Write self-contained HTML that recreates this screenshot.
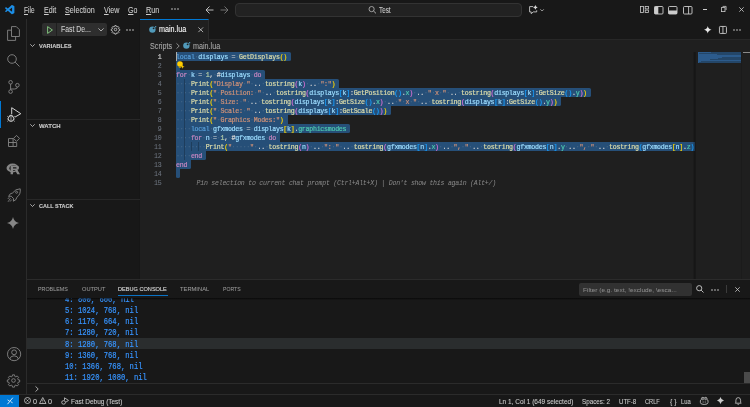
<!DOCTYPE html>
<html><head><meta charset="utf-8">
<style>
*{box-sizing:border-box;margin:0;padding:0}
html,body{width:750px;height:407px;overflow:hidden;background:#181818;font-family:"Liberation Sans",sans-serif;color:#cccccc}
.a{position:absolute}
svg{position:absolute;overflow:visible}
/* title bar */
#title{left:0;top:0;width:750px;height:19.8px;background:#181818;border-bottom:0.8px solid #262626}
.menu{position:absolute;top:5px;font-size:8.2px;line-height:10px;color:#cccccc;white-space:pre;-webkit-text-stroke:0.08px currentColor}
.menu u{text-decoration-thickness:0.6px;text-underline-offset:0.8px}
#cc{left:235px;top:2.8px;width:287px;height:13.9px;background:#222222;border:0.8px solid #333333;border-radius:4px}
/* activity */
#act{left:0;top:19px;width:27px;height:375px;background:#181818;border-right:1px solid #2b2b2b}
/* sidebar */
#side{left:27px;top:19px;width:113px;height:261px;background:#181818;border-right:0.8px solid #161616}
.sh{position:absolute;left:11.5px;font-size:6.2px;font-weight:bold;color:#cccccc;line-height:8px;white-space:pre;-webkit-text-stroke:0.1px currentColor}
.sep{position:absolute;left:0;width:112.5px;height:0.9px;background:#282828}
/* editor */
#ed{left:140px;top:19px;width:610px;height:261px;background:#1f1f1f}
#tabs{left:140px;top:19px;width:610px;height:20.8px;background:#181818;border-bottom:0.9px solid #272727}
#tab{left:140px;top:19px;width:69px;height:21.5px;background:#1f1f1f;border-top:1.5px solid #0078d4;border-right:0.9px solid #2b2b2b}
.sel{position:absolute;left:176.3px;height:9px;background:#264f78}
.ln{position:absolute;left:176.1px;height:9px;font-family:"Liberation Mono",monospace;font-size:6.6px;letter-spacing:-0.26px;line-height:9px;white-space:pre;padding-top:1.4px;-webkit-text-stroke:0.2px currentColor}
.ln b{font-weight:normal}
.ln i{font-style:normal;color:rgba(227,228,226,0.17);-webkit-text-stroke:0}
.num{position:absolute;left:140px;width:21.5px;text-align:right;font-family:"Liberation Mono",monospace;font-size:6.6px;letter-spacing:-0.26px;line-height:9px;color:#6e7681;padding-top:1.1px;-webkit-text-stroke:0.05px currentColor}
.num.act{-webkit-text-stroke:0.2px currentColor}
.num.act{color:#cccccc}
/* panel */
#panel{left:27px;top:279px;width:723px;height:115px;background:#181818;border-top:1px solid #2b2b2b}
.pt{position:absolute;top:285.1px;font-size:6.2px;line-height:8px;color:#9d9d9d;white-space:pre;-webkit-text-stroke:0.05px currentColor}
.con{position:absolute;left:65.2px;font-family:"Liberation Mono",monospace;font-size:8.6px;line-height:11.2px;color:#3794ff;white-space:pre;padding-top:1.8px;transform:scaleX(0.835);transform-origin:0 0;-webkit-text-stroke:0.2px currentColor}
/* status */
#status{left:0;top:394px;width:750px;height:13px;background:#181818;border-top:1px solid #2b2b2b}
.st{position:absolute;top:396.5px;font-size:7.2px;line-height:10px;color:#cccccc;white-space:pre;-webkit-text-stroke:0.08px currentColor}
</style></head><body><div id="wrap" style="position:absolute;left:0;top:0;width:750px;height:407px;will-change:transform">
<!-- TITLE BAR -->
<div id="title" class="a"></div>
<svg style="left:5.3px;top:4.8px" width="9.5" height="9.3" viewBox="0 0 100 100"><path fill="#1c8ee6" d="M96.46 10.8L75.86.87C73.48-.28 70.62.2 68.74 2.08L29.3 38.06 12.12 25.02c-1.6-1.22-3.84-1.12-5.33.24L1.28 30.27c-1.82 1.65-1.82 4.52 0 6.17L16.18 50 1.28 63.56c-1.82 1.65-1.82 4.52 0 6.17l5.51 5.01c1.49 1.36 3.73 1.46 5.33.24l17.18-13.04 39.45 35.98c1.88 1.88 4.74 2.36 7.120 1.21l20.6-9.92C98.6 88.4 100 86.2 100 83.8V16.2c0-2.4-1.4-4.6-3.540-5.4zM75.02 72.7L45.11 50 75.02 27.3v45.4z"/></svg>
<div class="menu" style="left:24.3px;top:5.6px;transform:scaleX(0.8019);transform-origin:0 0"><u>F</u>ile</div>
<div class="menu" style="left:44.2px;top:5.6px;transform:scaleX(0.8637);transform-origin:0 0"><u>E</u>dit</div>
<div class="menu" style="left:65.3px;top:5.6px;transform:scaleX(0.8812);transform-origin:0 0"><u>S</u>election</div>
<div class="menu" style="left:103.9px;top:5.6px;transform:scaleX(0.8681);transform-origin:0 0"><u>V</u>iew</div>
<div class="menu" style="left:128px;top:5.6px;transform:scaleX(0.8503);transform-origin:0 0"><u>G</u>o</div>
<div class="menu" style="left:146px;top:5.6px;transform:scaleX(0.8848);transform-origin:0 0"><u>R</u>un</div>
<svg style="left:170.8px;top:8.3px" width="8" height="2" viewBox="0 0 8 2"><circle cx="1" cy="1" r="0.75" fill="#dddddd"/><circle cx="4" cy="1" r="0.75" fill="#dddddd"/><circle cx="7" cy="1" r="0.75" fill="#dddddd"/></svg>
<svg style="left:205px;top:6px" width="9" height="8" viewBox="0 0 9 8"><path d="M8.5 4H1M4.5 0.5L1 4L4.5 7.5" stroke="#cccccc" stroke-width="0.9" fill="none"/></svg>
<svg style="left:219.5px;top:6px" width="9" height="8" viewBox="0 0 9 8"><path d="M0.5 4H8M4.5 0.5L8 4L4.5 7.5" stroke="#7a7a7a" stroke-width="0.9" fill="none"/></svg>
<div id="cc" class="a"></div>
<svg style="left:367.6px;top:6px" width="9" height="8" viewBox="0 0 9 8"><circle cx="3.6" cy="3.1" r="2.6" stroke="#bbbbbb" stroke-width="0.8" fill="none"/><path d="M5.5 5L8 7.4" stroke="#bbbbbb" stroke-width="0.9"/></svg>
<div class="menu" style="left:379.2px;top:6px;transform:scaleX(0.7725);transform-origin:0 0">Test</div>
<svg style="left:528.8px;top:4.6px" width="16" height="10" viewBox="0 0 16 10"><path d="M4.2 1.6H0.6V6.9H2.2V8.7L4.3 6.9H7.7V5.3" stroke="#cccccc" stroke-width="0.9" fill="none"/><path d="M6.4 0Q6.7 2 8.7 2.4Q6.7 2.8 6.4 4.8Q6.1 2.8 4.1 2.4Q6.1 2 6.4 0Z" fill="#d8d8d8"/><path d="M11.4 4.3L13.1 6L14.8 4.3" stroke="#bbbbbb" stroke-width="0.8" fill="none"/></svg>
<!-- layout icons -->
<svg style="left:640px;top:6px" width="9" height="7" viewBox="0 0 9 7"><rect x="0.5" y="0.5" width="3" height="6" stroke="#cccccc" stroke-width="0.8" fill="none"/><rect x="5.2" y="0.5" width="3.2" height="2.4" stroke="#cccccc" stroke-width="0.8" fill="none"/><rect x="5.2" y="4.1" width="3.2" height="2.4" stroke="#cccccc" stroke-width="0.8" fill="none"/></svg>
<svg style="left:653.7px;top:5.6px" width="9.5" height="8.5" viewBox="0 0 9.5 8.5"><rect x="0.5" y="0.5" width="8.5" height="7.5" rx="1" stroke="#cccccc" stroke-width="0.9" fill="none"/><rect x="0.5" y="0.5" width="3.8" height="7.5" fill="#cccccc"/></svg>
<svg style="left:668.4px;top:5.6px" width="9.5" height="8.5" viewBox="0 0 9.5 8.5"><rect x="0.5" y="0.5" width="8.5" height="7.5" rx="1" stroke="#cccccc" stroke-width="0.9" fill="none"/><rect x="0.5" y="4.5" width="8.5" height="3.5" fill="#cccccc"/></svg>
<svg style="left:683px;top:5.6px" width="9.5" height="8.5" viewBox="0 0 9.5 8.5"><rect x="0.5" y="0.5" width="8.5" height="7.5" rx="1" stroke="#cccccc" stroke-width="0.9" fill="none"/><path d="M5.6 0.5V8" stroke="#cccccc" stroke-width="0.9"/></svg>
<div class="a" style="left:702.8px;top:9.3px;width:4.4px;height:0.8px;background:#cccccc"></div>
<svg style="left:720.8px;top:6.3px" width="5.5" height="6" viewBox="0 0 5.5 6"><rect x="0.4" y="1.6" width="3.6" height="4" stroke="#cccccc" stroke-width="0.8" fill="none"/><path d="M1.6 0.4H5.1V4" stroke="#cccccc" stroke-width="0.8" fill="none"/></svg>
<svg style="left:738.8px;top:7px" width="5" height="5" viewBox="0 0 5 5"><path d="M0.3 0.3L4.7 4.7M4.7 0.3L0.3 4.7" stroke="#cccccc" stroke-width="0.8"/></svg>

<!-- ACTIVITY BAR -->
<div id="act" class="a"></div>
<div class="a" style="left:0;top:101.2px;width:1.3px;height:26.5px;background:#0078d4"></div>
<!-- explorer -->
<svg style="left:7px;top:25.8px" width="13" height="15" viewBox="0 0 13 15"><path d="M4.5 0.6H9.3L12.4 3.7V10.5H4.5Z" stroke="#868686" stroke-width="0.9" fill="none"/><path d="M4.5 4.2H0.6V14.4H8.6V10.5" stroke="#868686" stroke-width="0.9" fill="none"/></svg>
<!-- search -->
<svg style="left:7px;top:53.5px" width="13" height="13" viewBox="0 0 13 13"><circle cx="5" cy="5" r="4.3" stroke="#868686" stroke-width="0.9" fill="none"/><path d="M8.1 8.1L12.5 12.5" stroke="#868686" stroke-width="0.9"/></svg>
<!-- scm -->
<svg style="left:7.7px;top:80.2px" width="12" height="14" viewBox="0 0 12 14"><circle cx="2.6" cy="2.3" r="1.8" stroke="#868686" stroke-width="0.9" fill="none"/><circle cx="2.6" cy="11.6" r="1.8" stroke="#868686" stroke-width="0.9" fill="none"/><circle cx="9.4" cy="5.2" r="1.8" stroke="#868686" stroke-width="0.9" fill="none"/><path d="M2.6 4.1V9.8M9.4 7Q9.4 9 6.5 9H2.6" stroke="#868686" stroke-width="0.9" fill="none"/></svg>
<!-- run debug -->
<svg style="left:6.5px;top:106.5px" width="15" height="15" viewBox="0 0 15 15"><path d="M4.7 7.2V0.7L13.8 6.7L7.8 10.2" stroke="#d0d0d0" stroke-width="1" fill="none" stroke-linejoin="round"/><ellipse cx="4" cy="11.6" rx="2.7" ry="2.8" stroke="#d0d0d0" stroke-width="1" fill="none"/><path d="M2.3 8.9Q4 7.3 5.7 8.9" stroke="#d0d0d0" stroke-width="1" fill="none"/><path d="M0.3 9.3L1.4 10M7.7 9.3L6.6 10M0.2 12H1.2M7.8 12H6.8M0.4 14.4L1.4 13.6M7.6 14.4L6.6 13.6" stroke="#d0d0d0" stroke-width="0.8"/><path d="M4 10V14" stroke="#d0d0d0" stroke-width="0.7"/></svg>
<!-- extensions -->
<svg style="left:8.2px;top:134.8px" width="12" height="12" viewBox="0 0 12 12"><path d="M0.5 3.6H5.1V11.5H0.5ZM0.5 7.5H8.7V11.5H5.1" stroke="#868686" stroke-width="0.9" fill="none"/><path d="M8.5 0.4L11.5 3.4L8.5 6.4L5.5 3.4Z" stroke="#868686" stroke-width="0.9" fill="none"/></svg>
<!-- R -->
<svg style="left:6.4px;top:162.7px" width="15" height="12" viewBox="0 0 15 12"><ellipse cx="6.6" cy="5" rx="6.1" ry="4.4" fill="#868686"/><ellipse cx="7.6" cy="5.2" rx="4.2" ry="2.9" fill="#181818"/><path d="M4.6 2.5H10.5Q13 2.5 13 4.6Q13 6.2 11.2 6.6L14 11.2H11.3L9 7.2H7V11.2H4.6Z" fill="#868686"/><path d="M7 4.2H9.9Q10.6 4.2 10.6 4.9Q10.6 5.6 9.9 5.6H7Z" fill="#181818"/></svg>
<!-- rocket -->
<svg style="left:6.8px;top:188px" width="14" height="15" viewBox="0 0 14 15"><path d="M13.2 0.8Q8.5 0.8 5.5 5L3.3 5.8L1.6 8.4L4.2 8.2L6.6 10.6L6.4 13.2L9 11.5L9.8 9.3Q14 6.3 13.2 0.8Z" stroke="#868686" stroke-width="0.9" fill="none" stroke-linejoin="round"/><circle cx="9.6" cy="4.3" r="1" stroke="#868686" stroke-width="0.8" fill="none"/><path d="M3.5 10.2L1 13.8M4.8 11.5L3 13.6M2.3 9.2L0.8 11" stroke="#868686" stroke-width="0.8"/></svg>
<!-- sparkle -->
<svg style="left:7.3px;top:216.5px" width="12" height="12" viewBox="0 0 12 12"><path d="M6 0Q7 5 12 6Q7 7 6 12Q5 7 0 6Q5 5 6 0Z" fill="#868686"/></svg>
<!-- account -->
<svg style="left:6.7px;top:346.5px" width="14.5" height="14.5" viewBox="0 0 14.5 14.5"><circle cx="7.1" cy="7.1" r="6.6" stroke="#868686" stroke-width="0.9" fill="none"/><circle cx="7.1" cy="5.3" r="2.4" stroke="#868686" stroke-width="0.9" fill="none"/><path d="M2.7 12Q3.6 8.8 7.1 8.8Q10.6 8.8 11.5 12" stroke="#868686" stroke-width="0.9" fill="none"/></svg>
<!-- gear -->
<svg style="left:7px;top:374.3px" width="13" height="13" viewBox="0 0 24 24"><path d="M10.2 1.5h3.6l.6 2.9 1.9.8 2.5-1.6 2.5 2.5-1.6 2.5.8 1.9 2.9.6v3.6l-2.9.6-.8 1.9 1.6 2.5-2.5 2.5-2.5-1.6-1.9.8-.6 2.9h-3.6l-.6-2.9-1.9-.8-2.5 1.6-2.5-2.5 1.6-2.5-.8-1.9-2.9-.6v-3.6l2.9-.6.8-1.9-1.6-2.5 2.5-2.5 2.5 1.6 1.9-.8z" stroke="#868686" stroke-width="1.6" fill="none" stroke-linejoin="round"/><circle cx="12" cy="12" r="3.4" stroke="#868686" stroke-width="1.6" fill="none"/></svg>

<!-- SIDEBAR -->
<div id="side" class="a"></div>
<div class="a" style="left:42px;top:22.8px;width:65px;height:13px;background:#2e2e2e;border-radius:2px"></div>
<svg style="left:47px;top:25.5px" width="6" height="8" viewBox="0 0 6 8"><path d="M0.6 0.6L5.4 4L0.6 7.4Z" stroke="#89d185" stroke-width="0.9" fill="none" stroke-linejoin="round"/></svg>
<div class="a" style="left:56px;top:23px;width:1px;height:12.6px;background:#1f1f1f"></div>
<div class="menu" style="left:60.5px;top:24.5px;transform:scaleX(0.8394);transform-origin:0 0">Fast De...</div>
<svg style="left:97.5px;top:27.5px" width="6" height="4" viewBox="0 0 6 4"><path d="M0.4 0.4L3 3L5.6 0.4" stroke="#cccccc" stroke-width="0.8" fill="none"/></svg>
<svg style="left:110.5px;top:24.5px" width="9" height="9" viewBox="0 0 24 24"><path d="M10.2 1.5h3.6l.6 2.9 1.9.8 2.5-1.6 2.5 2.5-1.6 2.5.8 1.9 2.9.6v3.6l-2.9.6-.8 1.9 1.6 2.5-2.5 2.5-2.5-1.6-1.9.8-.6 2.9h-3.6l-.6-2.9-1.9-.8-2.5 1.6-2.5-2.5 1.6-2.5-.8-1.9-2.9-.6v-3.6l2.9-.6.8-1.9-1.6-2.5 2.5-2.5 2.5 1.6 1.9-.8z" stroke="#cccccc" stroke-width="2.2" fill="none" stroke-linejoin="round"/><circle cx="12" cy="12" r="3.4" stroke="#cccccc" stroke-width="2.2" fill="none"/></svg>
<svg style="left:125.8px;top:28.5px" width="8" height="2" viewBox="0 0 8 2"><circle cx="1" cy="1" r="0.75" fill="#dddddd"/><circle cx="4" cy="1" r="0.75" fill="#dddddd"/><circle cx="7" cy="1" r="0.75" fill="#dddddd"/></svg>
<svg style="left:30px;top:44.3px" width="5" height="3" viewBox="0 0 5 3"><path d="M0.3 0.3L2.5 2.5L4.7 0.3" stroke="#cccccc" stroke-width="0.8" fill="none"/></svg>
<div class="sh" style="left:38.7px;top:42px;transform:scaleX(0.9236);transform-origin:0 0">VARIABLES</div>
<div class="sep" style="left:27px;top:119.2px"></div>
<svg style="left:30px;top:124.3px" width="5" height="3" viewBox="0 0 5 3"><path d="M0.3 0.3L2.5 2.5L4.7 0.3" stroke="#cccccc" stroke-width="0.8" fill="none"/></svg>
<div class="sh" style="left:38.7px;top:122px;transform:scaleX(0.9715);transform-origin:0 0">WATCH</div>
<div class="sep" style="left:27px;top:199.2px"></div>
<svg style="left:30px;top:204.3px" width="5" height="3" viewBox="0 0 5 3"><path d="M0.3 0.3L2.5 2.5L4.7 0.3" stroke="#cccccc" stroke-width="0.8" fill="none"/></svg>
<div class="sh" style="left:38.7px;top:202px;transform:scaleX(0.8853);transform-origin:0 0">CALL STACK</div>

<!-- EDITOR -->
<div id="ed" class="a"></div>
<div id="tabs" class="a"></div>
<div id="tab" class="a"></div>
<svg style="left:148.7px;top:25.9px" width="7.5" height="7" viewBox="0 0 7.5 7"><circle cx="3.4" cy="3.6" r="3.2" fill="#519aba"/><circle cx="4.6" cy="2.3" r="0.9" fill="#1f1f1f"/><circle cx="6.6" cy="0.8" r="0.75" fill="#519aba"/></svg>
<div class="menu" style="left:159.4px;top:25px;color:#ffffff;transform:scaleX(0.8787);transform-origin:0 0">main.lua</div>
<svg style="left:197.6px;top:27.3px" width="5.5" height="5.5" viewBox="0 0 5.5 5.5"><path d="M0.4 0.4L5.1 5.1M5.1 0.4L0.4 5.1" stroke="#cccccc" stroke-width="0.8"/></svg>
<svg style="left:703.8px;top:25.6px" width="7.5" height="7.5" viewBox="0 0 12 12"><path d="M6 0Q7 5 12 6Q7 7 6 12Q5 7 0 6Q5 5 6 0Z" fill="#e8e8e8"/></svg>
<svg style="left:719px;top:26px" width="8" height="8" viewBox="0 0 8 8"><rect x="0.45" y="0.45" width="7" height="7" rx="0.8" stroke="#cccccc" stroke-width="0.9" fill="none"/><path d="M3.95 0.5V7.5" stroke="#cccccc" stroke-width="0.9"/></svg>
<svg style="left:733px;top:28.8px" width="8" height="2" viewBox="0 0 8 2"><circle cx="1" cy="1" r="0.75" fill="#dddddd"/><circle cx="4" cy="1" r="0.75" fill="#dddddd"/><circle cx="7" cy="1" r="0.75" fill="#dddddd"/></svg>
<!-- breadcrumb -->
<div class="menu" style="left:150px;top:41.6px;color:#a9a9a9;transform:scaleX(0.8789);transform-origin:0 0">Scripts</div>
<svg style="left:176px;top:43px" width="4" height="6" viewBox="0 0 4 6"><path d="M0.5 0.4L3.2 3L0.5 5.6" stroke="#a9a9a9" stroke-width="0.8" fill="none"/></svg>
<svg style="left:182.7px;top:41.8px" width="7.5" height="7" viewBox="0 0 7.5 7"><circle cx="3.4" cy="3.6" r="3.2" fill="#519aba"/><circle cx="4.6" cy="2.3" r="0.9" fill="#1f1f1f"/><circle cx="6.6" cy="0.8" r="0.75" fill="#519aba"/></svg>
<div class="menu" style="left:192.8px;top:41.6px;color:#a9a9a9;transform:scaleX(0.8787);transform-origin:0 0">main.lua</div>
<!-- code -->
<div class="a" style="left:140px;top:39px;width:555px;height:241px;overflow:hidden">
<div class="a" style="left:-140px;top:-39px;width:750px;height:280px">
<div class="sel" style="top:51.50px;width:115.00px;border-radius:1.6px 1.6px 1.6px 0px"></div>
<div class="sel" style="top:60.50px;width:4.00px;border-radius:0px 0px 0px 0px"></div>
<div class="sel" style="top:69.50px;width:89.10px;border-radius:0px 1.6px 0px 0px"></div>
<div class="sel" style="top:78.50px;width:163.10px;border-radius:0px 1.6px 0px 0px"></div>
<div class="sel" style="top:87.50px;width:414.70px;border-radius:0px 1.6px 1.6px 0px"></div>
<div class="sel" style="top:96.50px;width:385.10px;border-radius:0px 0px 1.6px 0px"></div>
<div class="sel" style="top:105.50px;width:214.90px;border-radius:0px 0px 1.6px 0px"></div>
<div class="sel" style="top:114.50px;width:111.30px;border-radius:0px 0px 0px 0px"></div>
<div class="sel" style="top:123.50px;width:174.20px;border-radius:0px 1.6px 1.6px 0px"></div>
<div class="sel" style="top:132.50px;width:103.90px;border-radius:0px 0px 0px 0px"></div>
<div class="sel" style="top:141.50px;width:522.00px;border-radius:0px 1.6px 1.6px 0px"></div>
<div class="sel" style="top:150.50px;width:29.90px;border-radius:0px 0px 1.6px 0px"></div>
<div class="sel" style="top:159.50px;width:15.10px;border-radius:0px 0px 1.6px 0px"></div>
<div class="sel" style="top:168.50px;width:4.00px;border-radius:0px 0px 1.6px 1.6px"></div>
<div class="ln" style="top:51.50px"><b style="color:#569cd6">local</b><i>·</i><b style="color:#9cdcfe">displays</b><i>·</i><b style="color:#d4d4d4">=</b><i>·</i><b style="color:#dcdcaa">GetDisplays</b><b style="color:#ffd700">(</b><b style="color:#ffd700">)</b></div>
<div class="num act" style="top:51.50px">1</div>
<div class="ln" style="top:60.50px"></div>
<div class="num" style="top:60.50px">2</div>
<div class="ln" style="top:69.50px"><b style="color:#c586c0">for</b><i>·</i><b style="color:#9cdcfe">k</b><i>·</i><b style="color:#d4d4d4">=</b><i>·</i><b style="color:#b5cea8">1</b><b style="color:#d4d4d4">,</b><i>·</i><b style="color:#d4d4d4">#</b><b style="color:#9cdcfe">displays</b><i>·</i><b style="color:#c586c0">do</b></div>
<div class="num" style="top:69.50px">3</div>
<div class="ln" style="top:78.50px"><i>····</i><b style="color:#dcdcaa">Print</b><b style="color:#ffd700">(</b><b style="color:#ce9178">&quot;Display</b><i>·</i><b style="color:#ce9178">&quot;</b><i>·</i><b style="color:#d4d4d4">..</b><i>·</i><b style="color:#dcdcaa">tostring</b><b style="color:#da70d6">(</b><b style="color:#9cdcfe">k</b><b style="color:#da70d6">)</b><i>·</i><b style="color:#d4d4d4">..</b><i>·</i><b style="color:#ce9178">&quot;:&quot;</b><b style="color:#ffd700">)</b></div>
<div class="num" style="top:78.50px">4</div>
<div class="ln" style="top:87.50px"><i>····</i><b style="color:#dcdcaa">Print</b><b style="color:#ffd700">(</b><b style="color:#ce9178">&quot;</b><i>·</i><b style="color:#ce9178">Position:</b><i>·</i><b style="color:#ce9178">&quot;</b><i>·</i><b style="color:#d4d4d4">..</b><i>·</i><b style="color:#dcdcaa">tostring</b><b style="color:#da70d6">(</b><b style="color:#9cdcfe">displays</b><b style="color:#179fff">[</b><b style="color:#9cdcfe">k</b><b style="color:#179fff">]</b><b style="color:#d4d4d4">:</b><b style="color:#dcdcaa">GetPosition</b><b style="color:#179fff">(</b><b style="color:#179fff">)</b><b style="color:#d4d4d4">.</b><b style="color:#4ec9b0">x</b><b style="color:#da70d6">)</b><i>·</i><b style="color:#d4d4d4">..</b><i>·</i><b style="color:#ce9178">&quot;</b><i>·</i><b style="color:#ce9178">x</b><i>·</i><b style="color:#ce9178">&quot;</b><i>·</i><b style="color:#d4d4d4">..</b><i>·</i><b style="color:#dcdcaa">tostring</b><b style="color:#da70d6">(</b><b style="color:#9cdcfe">displays</b><b style="color:#179fff">[</b><b style="color:#9cdcfe">k</b><b style="color:#179fff">]</b><b style="color:#d4d4d4">:</b><b style="color:#dcdcaa">GetSize</b><b style="color:#179fff">(</b><b style="color:#179fff">)</b><b style="color:#d4d4d4">.</b><b style="color:#4ec9b0">y</b><b style="color:#da70d6">)</b><b style="color:#ffd700">)</b></div>
<div class="num" style="top:87.50px">5</div>
<div class="ln" style="top:96.50px"><i>····</i><b style="color:#dcdcaa">Print</b><b style="color:#ffd700">(</b><b style="color:#ce9178">&quot;</b><i>·</i><b style="color:#ce9178">Size:</b><i>·</i><b style="color:#ce9178">&quot;</b><i>·</i><b style="color:#d4d4d4">..</b><i>·</i><b style="color:#dcdcaa">tostring</b><b style="color:#da70d6">(</b><b style="color:#9cdcfe">displays</b><b style="color:#179fff">[</b><b style="color:#9cdcfe">k</b><b style="color:#179fff">]</b><b style="color:#d4d4d4">:</b><b style="color:#dcdcaa">GetSize</b><b style="color:#179fff">(</b><b style="color:#179fff">)</b><b style="color:#d4d4d4">.</b><b style="color:#4ec9b0">x</b><b style="color:#da70d6">)</b><i>·</i><b style="color:#d4d4d4">..</b><i>·</i><b style="color:#ce9178">&quot;</b><i>·</i><b style="color:#ce9178">x</b><i>·</i><b style="color:#ce9178">&quot;</b><i>·</i><b style="color:#d4d4d4">..</b><i>·</i><b style="color:#dcdcaa">tostring</b><b style="color:#da70d6">(</b><b style="color:#9cdcfe">displays</b><b style="color:#179fff">[</b><b style="color:#9cdcfe">k</b><b style="color:#179fff">]</b><b style="color:#d4d4d4">:</b><b style="color:#dcdcaa">GetSize</b><b style="color:#179fff">(</b><b style="color:#179fff">)</b><b style="color:#d4d4d4">.</b><b style="color:#4ec9b0">y</b><b style="color:#da70d6">)</b><b style="color:#ffd700">)</b></div>
<div class="num" style="top:96.50px">6</div>
<div class="ln" style="top:105.50px"><i>····</i><b style="color:#dcdcaa">Print</b><b style="color:#ffd700">(</b><b style="color:#ce9178">&quot;</b><i>·</i><b style="color:#ce9178">Scale:</b><i>·</i><b style="color:#ce9178">&quot;</b><i>·</i><b style="color:#d4d4d4">..</b><i>·</i><b style="color:#dcdcaa">tostring</b><b style="color:#da70d6">(</b><b style="color:#9cdcfe">displays</b><b style="color:#179fff">[</b><b style="color:#9cdcfe">k</b><b style="color:#179fff">]</b><b style="color:#d4d4d4">:</b><b style="color:#dcdcaa">GetScale</b><b style="color:#179fff">(</b><b style="color:#179fff">)</b><b style="color:#da70d6">)</b><b style="color:#ffd700">)</b></div>
<div class="num" style="top:105.50px">7</div>
<div class="ln" style="top:114.50px"><i>····</i><b style="color:#dcdcaa">Print</b><b style="color:#ffd700">(</b><b style="color:#ce9178">&quot;</b><i>·</i><b style="color:#ce9178">Graphics</b><i>·</i><b style="color:#ce9178">Modes:&quot;</b><b style="color:#ffd700">)</b></div>
<div class="num" style="top:114.50px">8</div>
<div class="ln" style="top:123.50px"><i>····</i><b style="color:#569cd6">local</b><i>·</i><b style="color:#9cdcfe">gfxmodes</b><i>·</i><b style="color:#d4d4d4">=</b><i>·</i><b style="color:#9cdcfe">displays</b><b style="color:#ffd700">[</b><b style="color:#9cdcfe">k</b><b style="color:#ffd700">]</b><b style="color:#d4d4d4">.</b><b style="color:#4ec9b0">graphicsmodes</b></div>
<div class="num" style="top:123.50px">9</div>
<div class="ln" style="top:132.50px"><i>····</i><b style="color:#c586c0">for</b><i>·</i><b style="color:#9cdcfe">n</b><i>·</i><b style="color:#d4d4d4">=</b><i>·</i><b style="color:#b5cea8">1</b><b style="color:#d4d4d4">,</b><i>·</i><b style="color:#d4d4d4">#</b><b style="color:#9cdcfe">gfxmodes</b><i>·</i><b style="color:#c586c0">do</b></div>
<div class="num" style="top:132.50px">10</div>
<div class="ln" style="top:141.50px"><i>········</i><b style="color:#dcdcaa">Print</b><b style="color:#ffd700">(</b><b style="color:#ce9178">&quot;</b><i>·····</i><b style="color:#ce9178">&quot;</b><i>·</i><b style="color:#d4d4d4">..</b><i>·</i><b style="color:#dcdcaa">tostring</b><b style="color:#da70d6">(</b><b style="color:#9cdcfe">n</b><b style="color:#da70d6">)</b><i>·</i><b style="color:#d4d4d4">..</b><i>·</i><b style="color:#ce9178">&quot;:</b><i>·</i><b style="color:#ce9178">&quot;</b><i>·</i><b style="color:#d4d4d4">..</b><i>·</i><b style="color:#dcdcaa">tostring</b><b style="color:#da70d6">(</b><b style="color:#9cdcfe">gfxmodes</b><b style="color:#179fff">[</b><b style="color:#9cdcfe">n</b><b style="color:#179fff">]</b><b style="color:#d4d4d4">.</b><b style="color:#4ec9b0">x</b><b style="color:#da70d6">)</b><i>·</i><b style="color:#d4d4d4">..</b><i>·</i><b style="color:#ce9178">&quot;,</b><i>·</i><b style="color:#ce9178">&quot;</b><i>·</i><b style="color:#d4d4d4">..</b><i>·</i><b style="color:#dcdcaa">tostring</b><b style="color:#da70d6">(</b><b style="color:#9cdcfe">gfxmodes</b><b style="color:#179fff">[</b><b style="color:#9cdcfe">n</b><b style="color:#179fff">]</b><b style="color:#d4d4d4">.</b><b style="color:#4ec9b0">y</b><i>·</i><b style="color:#d4d4d4">..</b><i>·</i><b style="color:#ce9178">&quot;,</b><i>·</i><b style="color:#ce9178">&quot;</b><i>·</i><b style="color:#d4d4d4">..</b><i>·</i><b style="color:#dcdcaa">tostring</b><b style="color:#179fff">(</b><b style="color:#9cdcfe">gfxmodes</b><b style="color:#ffd700">[</b><b style="color:#9cdcfe">n</b><b style="color:#ffd700">]</b><b style="color:#d4d4d4">.</b><b style="color:#4ec9b0">z</b><b style="color:#179fff">)</b></div>
<div class="num" style="top:141.50px">11</div>
<div class="ln" style="top:150.50px"><i>····</i><b style="color:#c586c0">end</b></div>
<div class="num" style="top:150.50px">12</div>
<div class="ln" style="top:159.50px"><b style="color:#c586c0">end</b></div>
<div class="num" style="top:159.50px">13</div>
<div class="ln" style="top:168.50px"></div>
<div class="num" style="top:168.50px">14</div>
<div class="num" style="top:177.50px">15</div>
<div class="a" style="left:183.5px;top:78.5px;width:0.8px;height:9px;background:rgba(15,25,35,0.32)"></div>
<div class="a" style="left:183.5px;top:87.5px;width:0.8px;height:9px;background:rgba(15,25,35,0.32)"></div>
<div class="a" style="left:183.5px;top:96.5px;width:0.8px;height:9px;background:rgba(15,25,35,0.32)"></div>
<div class="a" style="left:183.5px;top:105.5px;width:0.8px;height:9px;background:rgba(15,25,35,0.32)"></div>
<div class="a" style="left:183.5px;top:114.5px;width:0.8px;height:9px;background:rgba(15,25,35,0.32)"></div>
<div class="a" style="left:183.5px;top:123.5px;width:0.8px;height:9px;background:rgba(15,25,35,0.32)"></div>
<div class="a" style="left:183.5px;top:132.5px;width:0.8px;height:9px;background:rgba(15,25,35,0.32)"></div>
<div class="a" style="left:183.5px;top:141.5px;width:0.8px;height:9px;background:rgba(15,25,35,0.32)"></div>
<div class="a" style="left:183.5px;top:150.5px;width:0.8px;height:9px;background:rgba(15,25,35,0.32)"></div>
<div class="a" style="left:190.7px;top:141.5px;width:0.8px;height:9px;background:rgba(15,25,35,0.32)"></div>
<div class="a" style="left:198.1px;top:141.5px;width:0.8px;height:9px;background:rgba(15,25,35,0.32)"></div>
<div class="a" style="left:196.5px;top:178.5px;font-family:'Liberation Mono',monospace;font-size:6.6px;letter-spacing:-0.26px;line-height:9px;font-style:italic;color:#8b8b8b;white-space:pre">Pin selection to current chat prompt (Ctrl+Alt+X) | Don't show this again (Alt+/)</div>
<div class="a" style="left:176.3px;top:52px;width:0.9px;height:8.5px;background:#aeafad"></div>
<svg style="left:176.8px;top:60.6px" width="8" height="8" viewBox="0 0 8 8"><circle cx="3" cy="3" r="2.8" fill="#ffcc00"/><path d="M5.6 3.8L6.1 5.3L7.6 5.8L6.1 6.3L5.6 7.8L5.1 6.3L3.6 5.8L5.1 5.3Z" fill="#ffcc00"/><path d="M1.8 5.6H4.2V6.8H1.8Z" fill="#c9a000"/></svg>
</div></div>
<!-- minimap -->
<div class="a" style="left:693.2px;top:51.5px;width:2.4px;height:228.5px;background:linear-gradient(90deg,rgba(0,0,0,0.05),rgba(0,0,0,0.35) 60%,rgba(0,0,0,0.15))"></div>
<div class="a" style="left:698.3px;top:52px;width:43.6px;height:10.8px;background:#244668;border-radius:0.5px"></div>
<div class="a" style="left:698.3px;top:52.00px;width:13.20px;height:0.8px;background:#2c5b8c"></div>
<div class="a" style="left:698.3px;top:52.77px;width:1.20px;height:0.8px;background:#2c5b8c"></div>
<div class="a" style="left:698.3px;top:53.54px;width:10.40px;height:0.8px;background:#2c5b8c"></div>
<div class="a" style="left:698.3px;top:54.31px;width:18.40px;height:0.8px;background:#2c5b8c"></div>
<div class="a" style="left:698.3px;top:55.08px;width:43.60px;height:0.8px;background:#2c5b8c"></div>
<div class="a" style="left:698.3px;top:55.85px;width:42.40px;height:0.8px;background:#2c5b8c"></div>
<div class="a" style="left:698.3px;top:56.62px;width:24.00px;height:0.8px;background:#2c5b8c"></div>
<div class="a" style="left:698.3px;top:57.39px;width:12.80px;height:0.8px;background:#2c5b8c"></div>
<div class="a" style="left:698.3px;top:58.16px;width:19.60px;height:0.8px;background:#2c5b8c"></div>
<div class="a" style="left:698.3px;top:58.93px;width:12.00px;height:0.8px;background:#2c5b8c"></div>
<div class="a" style="left:698.3px;top:59.70px;width:43.60px;height:0.8px;background:#2c5b8c"></div>
<div class="a" style="left:698.3px;top:60.47px;width:4.00px;height:0.8px;background:#2c5b8c"></div>
<div class="a" style="left:698.3px;top:61.24px;width:2.40px;height:0.8px;background:#2c5b8c"></div>
<div class="a" style="left:698.3px;top:62.01px;width:1.20px;height:0.8px;background:#2c5b8c"></div>
<div class="a" style="left:741.3px;top:51.5px;width:0.9px;height:228.5px;background:#1b1b1b"></div>
<div class="a" style="left:742.5px;top:51.8px;width:7.5px;height:0.9px;background:#8a8a8a"></div>

<!-- PANEL -->
<div id="panel" class="a"></div>
<div class="pt" style="left:38.4px;transform:scaleX(0.8665);transform-origin:0 0">PROBLEMS</div>
<div class="pt" style="left:81.6px;transform:scaleX(0.9199);transform-origin:0 0">OUTPUT</div>
<div class="pt" style="left:118.4px;color:#e7e7e7;transform:scaleX(0.9040);transform-origin:0 0">DEBUG CONSOLE</div>
<div class="a" style="left:118px;top:294.5px;width:50px;height:0.8px;background:#0a72c4"></div>
<div class="pt" style="left:180px;transform:scaleX(0.9330);transform-origin:0 0">TERMINAL</div>
<div class="pt" style="left:223px;transform:scaleX(0.8301);transform-origin:0 0">PORTS</div>
<div class="a" style="left:579px;top:283.2px;width:112.8px;height:12.5px;background:#313131;border-radius:2px"></div>
<div class="pt" style="left:583px;top:285.5px;color:#8b8b8b;transform:scaleX(1.0501);transform-origin:0 0">Filter (e.g. text, !exclude, \esca...</div>
<svg style="left:695.5px;top:285px" width="8" height="8" viewBox="0 0 8 8"><circle cx="3.2" cy="3.2" r="2.6" stroke="#cccccc" stroke-width="0.9" fill="none"/><path d="M5.1 5.1L7.5 7.5" stroke="#cccccc" stroke-width="0.9"/></svg>
<svg style="left:711px;top:288.5px" width="8" height="2" viewBox="0 0 8 2"><circle cx="1" cy="1" r="0.75" fill="#dddddd"/><circle cx="4" cy="1" r="0.75" fill="#dddddd"/><circle cx="7" cy="1" r="0.75" fill="#dddddd"/></svg>
<div class="a" style="left:726px;top:285px;width:0.8px;height:8px;background:#3c3c3c"></div>
<svg style="left:734.5px;top:286.8px" width="5" height="5" viewBox="0 0 5 5"><path d="M0.3 0.3L4.7 4.7M4.7 0.3L0.3 4.7" stroke="#cccccc" stroke-width="0.8"/></svg>
<div class="a" style="left:27px;top:298px;width:723px;height:85px;overflow:hidden">
 <div class="a" style="left:-27px;top:-298px;width:750px;height:400px">
  <div class="a" style="left:27px;top:337.8px;width:723px;height:11.2px;background:#2a2d2e"></div>
  <div class="con" style="top:293px">4: 800, 600, nil</div>
  <div class="con" style="top:304.2px">5: 1024, 768, nil</div>
  <div class="con" style="top:315.4px">6: 1176, 664, nil</div>
  <div class="con" style="top:326.6px">7: 1280, 720, nil</div>
  <div class="con" style="top:337.8px">8: 1280, 768, nil</div>
  <div class="con" style="top:349px">9: 1360, 768, nil</div>
  <div class="con" style="top:360.2px">10: 1366, 768, nil</div>
  <div class="con" style="top:371.4px">11: 1920, 1080, nil</div>
 </div>
</div>
<div class="a" style="left:27px;top:298px;width:723px;height:2.4px;background:linear-gradient(rgba(0,0,0,0.65),rgba(0,0,0,0))"></div>
<div class="a" style="left:27px;top:382.8px;width:723px;height:0.9px;background:#2b2b2b"></div>
<svg style="left:34.5px;top:385.5px" width="4" height="6" viewBox="0 0 4 6"><path d="M0.5 0.4L3.2 3L0.5 5.6" stroke="#cccccc" stroke-width="0.8" fill="none"/></svg>
<div class="a" style="left:744px;top:372px;width:6px;height:11px;background:#4a4a4a"></div>

<!-- STATUS -->
<div id="status" class="a"></div>
<div class="a" style="left:0;top:394.5px;width:19px;height:12.5px;background:#0078d4"></div>
<svg style="left:6.5px;top:396.5px" width="7" height="8" viewBox="0 0 7 8"><path d="M0.5 7.2L5.8 0.7" stroke="#ffffff" stroke-width="0.8"/><path d="M0.6 2.9L2.6 4.1M3.6 4.6L5.6 5.8" stroke="#ffffff" stroke-width="0.8"/></svg>
<svg style="left:24px;top:397.3px" width="7" height="7" viewBox="0 0 7 7"><circle cx="3.5" cy="3.5" r="3" stroke="#cccccc" stroke-width="0.8" fill="none"/><path d="M2.5 2.5L4.5 4.5M4.5 2.5L2.5 4.5" stroke="#cccccc" stroke-width="0.75"/></svg>
<div class="st" style="left:33px">0</div>
<svg style="left:39px;top:397px" width="7.5" height="7" viewBox="0 0 7.5 7"><path d="M3.75 0.5L7 6.5H0.5Z" stroke="#cccccc" stroke-width="0.8" fill="none" stroke-linejoin="round"/><path d="M3.75 2.5V4.5M3.75 5.2V5.8" stroke="#cccccc" stroke-width="0.7"/></svg>
<div class="st" style="left:48px">0</div>
<svg style="left:61px;top:397px" width="8" height="8" viewBox="0 0 8 8"><path d="M3.5 0.8L7.5 3.4L4.8 5.2" stroke="#cccccc" stroke-width="0.8" fill="none"/><path d="M3.5 0.8V3.2" stroke="#cccccc" stroke-width="0.8"/><ellipse cx="2.6" cy="5.4" rx="1.9" ry="1.8" stroke="#cccccc" stroke-width="0.8" fill="none"/></svg>
<div class="st" style="left:71px;transform:scaleX(0.8980);transform-origin:0 0">Fast Debug (Test)</div>
<div class="st" style="left:498.7px;transform:scaleX(0.9027);transform-origin:0 0">Ln 1, Col 1 (649 selected)</div>
<div class="st" style="left:581.9px;transform:scaleX(0.8727);transform-origin:0 0">Spaces: 2</div>
<div class="st" style="left:619px;transform:scaleX(0.8442);transform-origin:0 0">UTF-8</div>
<div class="st" style="left:645.4px;transform:scaleX(0.7880);transform-origin:0 0">CRLF</div>
<div class="st" style="left:669.8px;transform:scaleX(0.9688);transform-origin:0 0">{ }</div>
<div class="st" style="left:681px;transform:scaleX(0.8167);transform-origin:0 0">Lua</div>
<svg style="left:699.6px;top:396.9px" width="8.4" height="7.9" viewBox="0 0 16 15"><path d="M2.8 4.6V2.4Q2.8 0.7 5.4 0.7Q7.4 0.7 8 2Q8.6 0.7 10.6 0.7Q13.2 0.7 13.2 2.4V4.6Q15.3 5.4 15.3 7.3V10.3Q15.3 14.3 8 14.3Q0.7 14.3 0.7 10.3V7.3Q0.7 5.4 2.8 4.6Z" stroke="#cccccc" stroke-width="1.5" fill="none" stroke-linejoin="round"/><path d="M4.3 5.6Q7.5 5.6 7.5 3.4Q7.2 2 5.4 2Q4.3 2 4.3 3.2ZM11.7 5.6Q8.5 5.6 8.5 3.4Q8.8 2 10.6 2Q11.7 2 11.7 3.2Z" stroke="#cccccc" stroke-width="1.1" fill="none"/><path d="M6 8.6V10.6M10 8.6V10.6" stroke="#cccccc" stroke-width="1.5"/></svg>
<svg style="left:717px;top:397px" width="7" height="7" viewBox="0 0 12 12"><path d="M6 0Q7 5 12 6Q7 7 6 12Q5 7 0 6Q5 5 6 0Z" fill="#cccccc"/></svg>
<svg style="left:734.6px;top:396.8px" width="6.5" height="8" viewBox="0 0 6.5 8"><path d="M3.25 0.6Q5.6 0.6 5.6 3.2V5.3L6.2 6.2H0.3L0.9 5.3V3.2Q0.9 0.6 3.25 0.6Z" stroke="#cccccc" stroke-width="0.8" fill="none"/><path d="M2.4 7.2Q3.25 7.9 4.1 7.2" stroke="#cccccc" stroke-width="0.7" fill="none"/></svg>
</div></body></html>
